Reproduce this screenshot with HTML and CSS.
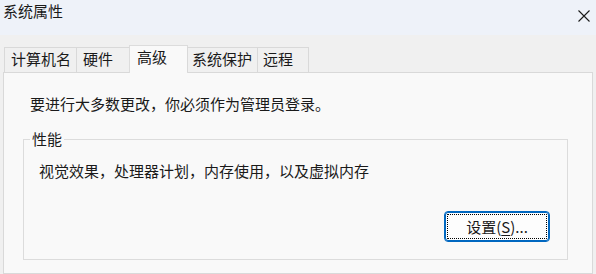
FILE: index.html
```html
<!DOCTYPE html>
<html lang="zh-CN">
<head>
<meta charset="utf-8">
<title>系统属性</title>
<link rel="stylesheet" href="styles.css">
</head>
<body>
<div class="window">
  <div class="titlebar">
    <span class="title">系统属性</span>
    <span class="close" aria-label="关闭">
      <svg width="12" height="12" viewBox="0 0 12 12"><path d="M0.5 0.5 L11.5 11.5 M11.5 0.5 L0.5 11.5" stroke="#1a1a1a" stroke-width="1.1" fill="none"/></svg>
    </span>
  </div>
  <div class="tabs">
    <div class="tab tab-name">计算机名</div>
    <div class="tab tab-hw">硬件</div>
    <div class="tab tab-adv selected">高级</div>
    <div class="tab tab-prot">系统保护</div>
    <div class="tab tab-remote">远程</div>
  </div>
  <div class="panel">
    <div class="notice">要进行大多数更改，你必须作为管理员登录。</div>
    <fieldset class="group">
      <legend>性能</legend>
      <div class="group-text">视觉效果，处理器计划，内存使用，以及虚拟内存</div>
      <div class="group-actions">
        <button class="btn">设置(<u>S</u>)...</button>
      </div>
    </fieldset>
  </div>
</div>
</body>
</html>
```
FILE: styles.css
```css
html, body {
  margin: 0;
  padding: 0;
  height: 100%;
  overflow: hidden;
}
body {
  background: #f0f0f0;
  font-family: "Noto Sans CJK SC", "Noto Sans", sans-serif;
  font-size: 15px;
  line-height: 20px;
  color: #1a1a1a;
}
.window {
  display: flex;
  flex-direction: column;
  height: 100%;
}
.titlebar {
  height: 35px;
  background: #eef2f9;
  display: flex;
  justify-content: space-between;
  align-items: flex-start;
  padding: 1px 0 0 3px;
  box-sizing: border-box;
}
.close {
  margin: 9px 6px 0 0;
  width: 12px;
  height: 12px;
  display: flex;
}
.tabs {
  display: flex;
  align-items: flex-end;
  margin-top: 10px;
  padding-left: 4px;
  height: 27px;
  position: relative;
  z-index: 1;
}
.tab {
  box-sizing: border-box;
  height: 25px;
  border: 1px solid #d9d9d9;
  border-bottom: none;
  background: #f0f0f0;
  padding: 1px 0 0 6px;
  white-space: nowrap;
  margin-left: -1px;
}
.tab:first-child { margin-left: 0; }
.tab-name { width: 73px; padding-left: 6px; }
.tab-hw { width: 54px; padding-left: 6px; }
.tab-adv { width: 59px; padding-left: 7px; }
.tab-prot { width: 71px; padding-left: 4px; }
.tab-remote { width: 52px; padding-left: 5px; }
.tab.selected {
  height: 28px;
  margin-bottom: -1px;
  background: #f9f9f9;
  border-color: #dcdcdc;
}
.panel {
  flex: 1;
  margin: 0 3px;
  border: 1px solid #d9d9d9;
  background: #f9f9f9;
  padding: 21px 24px 0 19px;
}
.notice {
  padding-left: 7px;
}
.group {
  margin: 15px 0 0 0;
  padding: 0 17px 17px 0;
  border: 1px solid #dcdcdc;
  min-width: 0;
}
.group legend {
  margin-left: 6px;
  padding: 0 2px;
  line-height: 20px;
}
.group-text {
  margin-top: 12px;
  padding-left: 15px;
}
.group-actions {
  display: flex;
  justify-content: flex-end;
  margin-top: 30px;
}
.btn {
  width: 106px;
  height: 31px;
  box-sizing: border-box;
  border: 1px solid #0067c0;
  box-shadow: inset 0 0 0 1px #0067c0;
  border-radius: 4px;
  background: #fdfdfd;
  font-family: inherit;
  font-size: 15px;
  line-height: 20px;
  color: #1a1a1a;
  padding: 0;
  outline: 1px dotted #000;
  outline-offset: -4px;
}
.btn u {
  text-decoration-thickness: 1px;
  text-underline-offset: 2px;
}
```
